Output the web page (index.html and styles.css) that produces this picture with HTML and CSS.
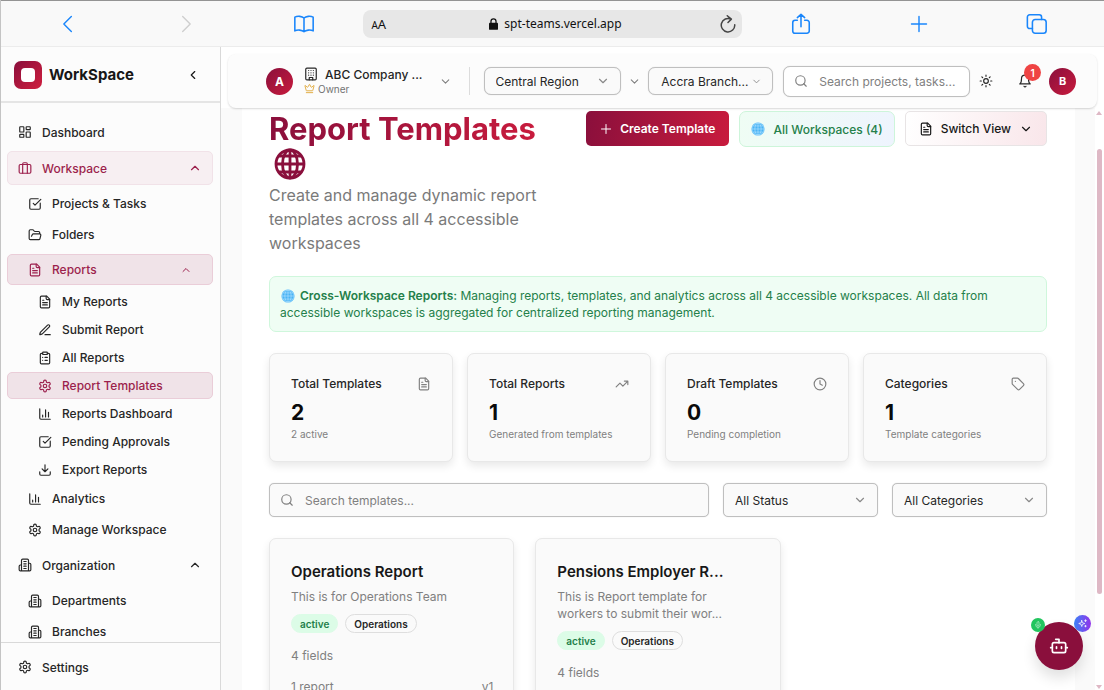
FILE: index.html
```html
<!DOCTYPE html>
<html lang="en">
<head>
<meta charset="utf-8">
<title>WorkSpace - Report Templates</title>
<link rel="stylesheet" href="styles.css">
</head>
<body>
<svg class="sprite" aria-hidden="true">
  <symbol id="chev-left" viewBox="0 0 24 24"><path d="m15 18-6-6 6-6"/></symbol>
  <symbol id="chev-down" viewBox="0 0 24 24"><path d="m6 9 6 6 6-6"/></symbol>
  <symbol id="chev-up" viewBox="0 0 24 24"><path d="m18 15-6-6-6 6"/></symbol>
  <symbol id="dashboard" viewBox="0 0 24 24"><rect x="3" y="3" width="7" height="9" rx="1"/><rect x="14" y="3" width="7" height="5" rx="1"/><rect x="14" y="12" width="7" height="9" rx="1"/><rect x="3" y="16" width="7" height="5" rx="1"/></symbol>
  <symbol id="briefcase" viewBox="0 0 24 24"><rect x="2" y="6" width="20" height="15" rx="2"/><path d="M8 21V5a2 2 0 0 1 2-2h4a2 2 0 0 1 2 2v16"/></symbol>
  <symbol id="check-square" viewBox="0 0 24 24"><path d="M21 10.5V19a2 2 0 0 1-2 2H5a2 2 0 0 1-2-2V5a2 2 0 0 1 2-2h12.5"/><path d="m9 11 3 3L22 4"/></symbol>
  <symbol id="folder" viewBox="0 0 24 24"><path d="m6 14 1.5-2.9A2 2 0 0 1 9.24 10H20a2 2 0 0 1 1.94 2.5l-1.54 6a2 2 0 0 1-1.95 1.5H4a2 2 0 0 1-2-2V5a2 2 0 0 1 2-2h3.9a2 2 0 0 1 1.69.9l.81 1.2a2 2 0 0 0 1.67.9H18a2 2 0 0 1 2 2v2"/></symbol>
  <symbol id="file" viewBox="0 0 24 24"><path d="M15 2H6a2 2 0 0 0-2 2v16a2 2 0 0 0 2 2h12a2 2 0 0 0 2-2V7Z"/><path d="M14 2v4a2 2 0 0 0 2 2h4M10 9H8M16 13H8M16 17H8"/></symbol>
  <symbol id="pen" viewBox="0 0 24 24"><path d="M12 20h9"/><path d="M16.4 3.6a2.1 2.1 0 0 1 3 3L7.4 18.6a2 2 0 0 1-.9.5l-2.9.85a.5.5 0 0 1-.6-.62l.84-2.87a2 2 0 0 1 .5-.86z"/></symbol>
  <symbol id="clipboard" viewBox="0 0 24 24"><rect x="8" y="2" width="8" height="4" rx="1"/><path d="M16 4h2a2 2 0 0 1 2 2v14a2 2 0 0 1-2 2H6a2 2 0 0 1-2-2V6a2 2 0 0 1 2-2h2M12 11h4M12 16h4M8 11h.01M8 16h.01"/></symbol>
  <symbol id="gear" viewBox="0 0 24 24"><path d="M12.22 2h-.44a2 2 0 0 0-2 2v.18a2 2 0 0 1-1 1.73l-.43.25a2 2 0 0 1-2 0l-.15-.08a2 2 0 0 0-2.73.73l-.22.38a2 2 0 0 0 .73 2.73l.15.1a2 2 0 0 1 1 1.72v.51a2 2 0 0 1-1 1.74l-.15.09a2 2 0 0 0-.73 2.73l.22.38a2 2 0 0 0 2.73.73l.15-.08a2 2 0 0 1 2 0l.43.25a2 2 0 0 1 1 1.73V20a2 2 0 0 0 2 2h.44a2 2 0 0 0 2-2v-.18a2 2 0 0 1 1-1.73l.43-.25a2 2 0 0 1 2 0l.15.08a2 2 0 0 0 2.73-.73l.22-.39a2 2 0 0 0-.73-2.73l-.15-.08a2 2 0 0 1-1-1.74v-.5a2 2 0 0 1 1-1.74l.15-.09a2 2 0 0 0 .73-2.73l-.22-.38a2 2 0 0 0-2.73-.73l-.15.08a2 2 0 0 1-2 0l-.43-.25a2 2 0 0 1-1-1.73V4a2 2 0 0 0-2-2z"/><circle cx="12" cy="12" r="3"/></symbol>
  <symbol id="chart" viewBox="0 0 24 24"><path d="M3 3v16a2 2 0 0 0 2 2h16M18 17V9M13 17V5M8 17v-3"/></symbol>
  <symbol id="download" viewBox="0 0 24 24"><path d="M21 15v4a2 2 0 0 1-2 2H5a2 2 0 0 1-2-2v-4M7 10l5 5 5-5M12 15V3"/></symbol>
  <symbol id="building" viewBox="0 0 24 24"><path d="M6 22V4a2 2 0 0 1 2-2h8a2 2 0 0 1 2 2v18ZM6 12H4a2 2 0 0 0-2 2v6a2 2 0 0 0 2 2h2M18 9h2a2 2 0 0 1 2 2v9a2 2 0 0 1-2 2h-2M10 6h4M10 10h4M10 14h4M10 18h4"/></symbol>
  <symbol id="office" viewBox="0 0 24 24"><rect x="3" y="2" width="18" height="20" rx="2"/><path d="M9 22v-4h6v4M8 6h.01M16 6h.01M12 6h.01M12 10h.01M12 14h.01M16 10h.01M16 14h.01M8 10h.01M8 14h.01"/></symbol>
  <symbol id="crown" viewBox="0 0 24 24"><path d="M11.56 3.27a.5.5 0 0 1 .88 0L15.4 8.87a1 1 0 0 0 1.5.3L21.2 5.5a.5.5 0 0 1 .8.52l-2.84 10.25a1 1 0 0 1-.95.73H5.8a1 1 0 0 1-.95-.73L2 6.02a.5.5 0 0 1 .8-.52l4.28 3.66a1 1 0 0 0 1.5-.3zM5 21h14"/></symbol>
  <symbol id="search" viewBox="0 0 24 24"><circle cx="11" cy="11" r="8"/><path d="m21 21-4.3-4.3"/></symbol>
  <symbol id="sun" viewBox="0 0 24 24"><circle cx="12" cy="12" r="4"/><path d="M12 2v2M12 20v2M4.9 4.9l1.4 1.4M17.7 17.7l1.4 1.4M2 12h2M20 12h2M6.3 17.7l-1.4 1.4M19.1 4.9l-1.4 1.4"/></symbol>
  <symbol id="bell" viewBox="0 0 24 24"><path d="M6 8a6 6 0 0 1 12 0c0 7 3 9 3 9H3s3-2 3-9M10.3 21a1.94 1.94 0 0 0 3.4 0"/></symbol>
  <symbol id="plus" viewBox="0 0 24 24"><path d="M3 12h18M12 3v18"/></symbol>
  <symbol id="trend" viewBox="0 0 24 24"><path d="m22 7-8.5 8.5-5-5L2 17M16 7h6v6"/></symbol>
  <symbol id="clock" viewBox="0 0 24 24"><circle cx="12" cy="12" r="10"/><path d="M12 6v6l4 2"/></symbol>
  <symbol id="tag" viewBox="0 0 24 24"><path d="M12.59 2.59A2 2 0 0 0 11.17 2H4a2 2 0 0 0-2 2v7.17a2 2 0 0 0 .59 1.42l8.7 8.7a2.43 2.43 0 0 0 3.42 0l6.58-6.58a2.43 2.43 0 0 0 0-3.42zM7.5 7.5h.01"/></symbol>
  <symbol id="bot" viewBox="0 0 24 24"><path d="M12 8V4H8M2 14h2M20 14h2M15 13v2M9 13v2"/><rect x="4" y="8" width="16" height="12" rx="2"/></symbol>
  <symbol id="mic" viewBox="0 0 24 24"><rect x="9" y="2" width="6" height="13" rx="3"/><path d="M19 10v2a7 7 0 0 1-14 0v-2M12 19v3"/></symbol>
  <symbol id="sparkle" viewBox="0 0 24 24"><path d="M10 4 12 10l6 2-6 2-2 6-2-6-6-2 6-2zM20 2v5M17.500 4.500h5M20 17v4M18 19h4"/></symbol>
  <symbol id="globe" viewBox="0 0 32 32"><circle cx="16" cy="16" r="14"/><ellipse cx="16" cy="16" rx="7.500" ry="14"/><path d="M16 2v28M2 16h28M5 8h22M5 24h22"/></symbol>
  <symbol id="globe-blue" viewBox="0 0 16 16"><circle cx="8" cy="8" r="7.500" fill="#49b4f5" stroke="none"/><g stroke="#b7e3ff" stroke-width="0.700" fill="none"><ellipse cx="8" cy="8" rx="3.600" ry="7"/><circle cx="8" cy="8" r="7"/><path d="M8 1v14M1 8h14M2 4.500h12M2 11.500h12"/></g></symbol>
</svg>

<div class="browser">
  <button class="tool" aria-label="Back"><svg viewBox="0 0 24 24"><path d="M16 3 7 12l9 9"/></svg></button>
  <button class="tool tool-off" aria-label="Forward"><svg viewBox="0 0 24 24"><path d="m8 3 9 9-9 9"/></svg></button>
  <button class="tool" aria-label="Bookmarks"><svg viewBox="0 0 24 24"><path d="M12 5.500C10 3.500 5 3 2 4.500v15c3-1.500 8-1 10 1 2-2 7-2.500 10-1v-15c-3-1.500-8-1-10 1zv15"/></svg></button>
  <div class="address">
    <span class="aa"><small>A</small>A</span>
    <span class="url"><svg viewBox="0 0 10 13"><rect x="0" y="5" width="10" height="8" rx="1" fill="currentColor"/><path d="M2.200 6V3.500a2.800 2.800 0 0 1 5.600 0V6" fill="none" stroke="currentColor" stroke-width="1.400"/></svg>spt-teams.vercel.app</span>
    <button class="reload" aria-label="Reload"><svg viewBox="0 0 24 24"><path d="M16 5.500A9 9 0 1 0 21 13M11 1l5.500 4.500L12 10"/></svg></button>
  </div>
  <button class="tool" aria-label="Share"><svg viewBox="0 0 24 24"><path d="M8 8H5.500A2.500 2.500 0 0 0 3 10.500v9A2.500 2.500 0 0 0 5.500 22h13a2.500 2.500 0 0 0 2.500-2.500v-9A2.500 2.500 0 0 0 18.500 8H16M12 15V1.500M8 5l4-3.500L16 5"/></svg></button>
  <button class="tool" aria-label="New tab"><svg viewBox="0 0 24 24"><path d="M3 12h18M12 3v18"/></svg></button>
  <button class="tool" aria-label="Tabs"><svg viewBox="0 0 24 24"><rect x="7" y="7" width="15" height="15" rx="3"/><path d="M7 17H4a2.500 2.500 0 0 1-2.500-2.500V4.500A2.500 2.500 0 0 1 4 2h10.500A2.500 2.500 0 0 1 17 4.500V7"/></svg></button>
</div>

<div class="app">
  <aside class="sidebar">
    <div class="brand">
      <span class="logo"></span>
      <strong>WorkSpace</strong>
      <button class="collapse" aria-label="Collapse sidebar"><svg class="icon"><use href="#chev-left"/></svg></button>
    </div>
    <nav class="nav">
      <a class="row" href="#"><svg class="icon"><use href="#dashboard"/></svg>Dashboard</a>
      <a class="row open" href="#"><svg class="icon"><use href="#briefcase"/></svg>Workspace<svg class="icon caret"><use href="#chev-up"/></svg></a>
      <div class="level2">
        <a class="row" href="#"><svg class="icon"><use href="#check-square"/></svg>Projects &amp; Tasks</a>
        <a class="row" href="#"><svg class="icon"><use href="#folder"/></svg>Folders</a>
        <a class="row active" href="#"><svg class="icon"><use href="#file"/></svg>Reports<svg class="icon caret"><use href="#chev-up"/></svg></a>
        <div class="level3">
          <a class="row" href="#"><svg class="icon"><use href="#file"/></svg>My Reports</a>
          <a class="row" href="#"><svg class="icon"><use href="#pen"/></svg>Submit Report</a>
          <a class="row" href="#"><svg class="icon"><use href="#clipboard"/></svg>All Reports</a>
          <a class="row active" href="#"><svg class="icon"><use href="#gear"/></svg>Report Templates</a>
          <a class="row" href="#"><svg class="icon"><use href="#chart"/></svg>Reports Dashboard</a>
          <a class="row" href="#"><svg class="icon"><use href="#check-square"/></svg>Pending Approvals</a>
          <a class="row" href="#"><svg class="icon"><use href="#download"/></svg>Export Reports</a>
        </div>
        <a class="row" href="#"><svg class="icon"><use href="#chart"/></svg>Analytics</a>
        <a class="row" href="#"><svg class="icon"><use href="#gear"/></svg>Manage Workspace</a>
      </div>
      <a class="row" href="#"><svg class="icon"><use href="#building"/></svg>Organization<svg class="icon caret"><use href="#chev-up"/></svg></a>
      <div class="level2">
        <a class="row" href="#"><svg class="icon"><use href="#building"/></svg>Departments</a>
        <a class="row" href="#"><svg class="icon"><use href="#building"/></svg>Branches</a>
      </div>
    </nav>
    <div class="side-foot">
      <a class="row" href="#"><svg class="icon"><use href="#gear"/></svg>Settings</a>
    </div>
  </aside>

  <main class="main">
    <header class="topbar">
      <span class="avatar">A</span>
      <button class="company">
        <span class="company-text">
          <span class="company-name"><svg class="icon"><use href="#office"/></svg>ABC Company ...</span>
          <span class="company-role"><svg class="icon"><use href="#crown"/></svg>Owner</span>
        </span>
        <svg class="icon small"><use href="#chev-down"/></svg>
      </button>
      <span class="divider"></span>
      <span class="picker region">
        <select aria-label="Region"><option>Central Region</option></select>
        <svg class="icon"><use href="#chev-down"/></svg>
      </span>
      <svg class="icon small between"><use href="#chev-down"/></svg>
      <span class="picker branch">
        <select aria-label="Branch"><option>Accra Branch...</option></select>
        <svg class="icon"><use href="#chev-down"/></svg>
      </span>
      <label class="search top-search">
        <svg class="icon"><use href="#search"/></svg>
        <input type="text" aria-label="Search projects" placeholder="Search projects, tasks...">
      </label>
      <button class="plain" aria-label="Theme"><svg class="icon"><use href="#sun"/></svg></button>
      <button class="plain bell" aria-label="Notifications"><svg class="icon"><use href="#bell"/></svg><span class="count">1</span></button>
      <span class="avatar avatar-b">B</span>
    </header>

    <div class="scroller">
      <div class="page">
        <section class="head">
          <div class="intro">
            <h1><span>Report Templates</span> <svg class="title-globe"><use href="#globe"/></svg></h1>
            <p>Create and manage dynamic report templates across all 4 accessible workspaces</p>
          </div>
          <div class="actions">
            <button class="btn primary"><svg class="icon"><use href="#plus"/></svg>Create Template</button>
            <span class="btn all"><svg class="globe"><use href="#globe-blue"/></svg>All Workspaces (4)</span>
            <button class="btn switch"><svg class="icon"><use href="#file"/></svg>Switch View<svg class="icon"><use href="#chev-down"/></svg></button>
          </div>
        </section>

        <p class="notice"><svg class="globe"><use href="#globe-blue"/></svg><b>Cross-Workspace Reports:</b> Managing reports, templates, and analytics across all 4 accessible workspaces. All data from accessible workspaces is aggregated for centralized reporting management.</p>

        <section class="stats">
          <article class="card"><h2>Total Templates<svg class="icon"><use href="#file"/></svg></h2><strong>2</strong><p>2 active</p></article>
          <article class="card"><h2>Total Reports<svg class="icon"><use href="#trend"/></svg></h2><strong>1</strong><p>Generated from templates</p></article>
          <article class="card"><h2>Draft Templates<svg class="icon"><use href="#clock"/></svg></h2><strong>0</strong><p>Pending completion</p></article>
          <article class="card"><h2>Categories<svg class="icon"><use href="#tag"/></svg></h2><strong>1</strong><p>Template categories</p></article>
        </section>

        <section class="filters">
          <label class="search">
            <svg class="icon"><use href="#search"/></svg>
            <input type="text" aria-label="Search templates" placeholder="Search templates...">
          </label>
          <span class="picker">
            <select aria-label="Status"><option>All Status</option></select>
            <svg class="icon"><use href="#chev-down"/></svg>
          </span>
          <span class="picker">
            <select aria-label="Category"><option>All Categories</option></select>
            <svg class="icon"><use href="#chev-down"/></svg>
          </span>
        </section>

        <section class="templates">
          <article class="card">
            <h3>Operations Report</h3>
            <p>This is for Operations Team</p>
            <div class="tags"><span class="tag on">active</span><span class="tag">Operations</span></div>
            <div class="meta"><span>4 fields</span></div>
            <div class="meta"><span>1 report</span><span>v1</span></div>
          </article>
          <article class="card">
            <h3>Pensions Employer R...</h3>
            <p>This is Report template for workers to submit their wor...</p>
            <div class="tags"><span class="tag on">active</span><span class="tag">Operations</span></div>
            <div class="meta"><span>4 fields</span></div>
          </article>
        </section>
      </div>
      <div class="scrollbar"><i class="up"></i><i class="thumb"></i><i class="down"></i></div>
    </div>
    <button class="fab" aria-label="Assistant">
      <svg class="icon"><use href="#bot"/></svg>
      <span class="dot green"><svg class="icon"><use href="#mic"/></svg></span>
      <span class="dot violet"><svg class="icon"><use href="#sparkle"/></svg></span>
    </button>
  </main>
</div>
</body>
</html>
```
FILE: styles.css
```css
* { box-sizing: border-box; }
body {
  margin: 0;
  height: 100vh;
  display: flex;
  flex-direction: column;
  overflow: hidden;
  font-family: Inter, "Liberation Sans", sans-serif;
  font-size: 12px;
  color: #262626;
  background: #fff;
  border-left: 1px solid #c4c4c4;
}
button { font: inherit; color: inherit; background: none; border: 0; padding: 0; }
h1, h2, h3, p { margin: 0; }
a { color: inherit; text-decoration: none; }
.sprite { position: absolute; width: 0; height: 0; }
.icon {
  width: 14px;
  height: 14px;
  flex: none;
  fill: none;
  stroke: currentColor;
  stroke-width: 2;
  stroke-linecap: round;
  stroke-linejoin: round;
}

/* Browser toolbar */
.browser {
  flex: none;
  height: 47px;
  display: grid;
  grid-template-columns: repeat(3, 1fr) 3.2fr repeat(3, 1fr);
  align-items: center;
  padding: 0 8px;
  background: #f9f9f9;
  border-top: 1px solid #949494;
  border-bottom: 1px solid #ececec;
}
.tool { color: #1a86fb; display: flex; justify-content: center; }
.tool svg, .reload svg {
  fill: none;
  stroke: currentColor;
  stroke-width: 1.7;
  stroke-linecap: round;
  stroke-linejoin: round;
}
.tool svg { width: 20px; height: 20px; }
.tool:nth-child(3) svg, .tool:nth-child(5) svg, .tool:nth-child(7) svg { width: 22px; height: 22px; }
.tool-off { color: #cfcfcf; }
.address {
  height: 28px;
  display: grid;
  grid-template-columns: 24px 1fr 24px;
  align-items: center;
  padding: 0 2px 0 8px;
  border-radius: 8px;
  background: #e7e7e7;
  color: #111;
  font-family: "Noto Sans", "Open Sans", sans-serif;
  font-size: 12px;
}
.aa { font-size: 13px; }
.aa small { font-size: 10px; }
.url { display: flex; align-items: center; justify-content: center; gap: 6px; }
.url svg { width: 9px; height: 12px; }
.reload { display: flex; justify-content: center; color: #444; }
.reload svg { width: 18px; height: 18px; stroke-width: 2; }

/* Shell */
.app { flex: 1; min-height: 0; display: flex; }
.sidebar {
  flex: none;
  width: 220px;
  display: flex;
  flex-direction: column;
  background: #fcfcfc;
  border-right: 1px solid #d9d9d9;
}
.brand {
  flex: none;
  height: 56px;
  display: flex;
  align-items: center;
  gap: 7px;
  padding: 1px 20px 0 13px;
  border-bottom: 2px solid #e5e5e5;
  color: #171717;
  font-size: 15px;
}
.brand strong { flex: 1; }
.logo {
  width: 28px;
  height: 28px;
  display: grid;
  place-items: center;
  border-radius: 7px;
  background: linear-gradient(135deg, #8a0f3c, #d01f3f);
}
.logo::after { content: ""; width: 14px; height: 14px; border-radius: 4px; background: #fff; }
.collapse { display: flex; }
.nav {
  flex: 1;
  min-height: 0;
  overflow: hidden;
  display: flex;
  flex-direction: column;
  gap: 2px;
  padding: 12px 7px 0 6px;
}
.row {
  flex: none;
  height: 34px;
  display: flex;
  align-items: center;
  gap: 10px;
  padding: 0 10px;
  border: 1px solid transparent;
  border-radius: 5px;
  font-weight: 500;
}
.caret { margin-left: auto; }
.row.open { color: #9c1f4c; background: #f7eff2; border-color: #f1e2e8; }
.row.active { color: #9c1f4c; background: #f0e3e8; border-color: #eacdd8; }
.level2 { display: flex; flex-direction: column; padding: 1px 0; }
.level2 .row { height: 31px; padding: 0 20px; }
.level2 > .active { margin-top: 4px; }
.level2 > .active .caret { width: 12px; height: 12px; }
.level3 { display: flex; flex-direction: column; gap: 1px; padding-top: 3px; }
.level3 .row { height: 27px; padding: 0 30px; }
.side-foot {
  flex: none;
  height: 48px;
  padding: 7px 7px 0 6px;
  border-top: 1px solid #d9d9d9;
}

/* Top bar */
.main { flex: 1; min-width: 0; display: flex; flex-direction: column; position: relative; }
.topbar {
  flex: none;
  height: 54px;
  display: flex;
  align-items: center;
  margin: 7px 7px 0;
  padding: 0 21px 0 38px;
  background: #fcfcfc;
  border-radius: 8px;
  box-shadow: 0 1px 2px rgba(0, 0, 0, 0.16);
  position: relative;
}
.avatar {
  flex: none;
  width: 27px;
  height: 27px;
  border-radius: 50%;
  display: grid;
  place-items: center;
  color: #fff;
  font-size: 12px;
  font-weight: 700;
  background: linear-gradient(135deg, #8a0f3c, #c81b3d);
}
.avatar-b { font-size: 11px; margin-left: 17px; }
.company { display: flex; align-items: center; gap: 16px; margin-left: 11px; }
.company-text { display: flex; flex-direction: column; align-items: flex-start; }
.company-name, .company-role { display: flex; align-items: center; white-space: nowrap; }
.company-name { gap: 7px; font-weight: 500; line-height: 15px; }
.company-role { gap: 3px; color: #737373; font-size: 10px; line-height: 14px; }
.company-role .icon { width: 11px; height: 11px; color: #dfa83a; }
.small { width: 13px; height: 13px; color: #808080; }
.divider { width: 1px; height: 28px; background: #dcdcdc; margin: 0 14px 0 17px; }
.between { margin: 0 7px; }
.picker { display: grid; align-items: center; min-width: 0; }
.picker > * { grid-area: 1 / 1; }
.picker .icon { justify-self: end; margin-right: 11px; color: #8a8a8a; pointer-events: none; }
.picker select {
  width: 100%;
  height: 34px;
  padding: 0 11px;
  appearance: none;
  font: inherit;
  color: #262626;
  background: #fafafa;
  border: 1px solid #bfbfbf;
  border-radius: 5px;
  box-shadow: 0 0 1px rgba(0, 0, 0, 0.2);
}
.topbar .picker select { height: 28px; border-radius: 7px; }
.topbar .branch select { padding: 0 12px; }
.region { flex: 138 1 0; }
.branch { flex: 125 1 0; }
.topbar .branch .icon { width: 11px; height: 11px; }
.search {
  display: flex;
  align-items: center;
  gap: 11px;
  min-width: 0;
  padding: 0 10px;
  color: #808080;
  background: #fafafa;
  border: 1px solid #bfbfbf;
  border-radius: 5px;
  box-shadow: 0 0 1px rgba(0, 0, 0, 0.2);
}
.search input {
  flex: 1;
  min-width: 0;
  padding: 0;
  font: inherit;
  border: 0;
  outline: 0;
  background: none;
}
.search input::placeholder { color: #808080; opacity: 1; }
.top-search {
  flex: 165 1 0;
  height: 31px;
  margin-left: 10px;
  background: #fff;
  border-radius: 7px;
}
.plain { display: flex; margin-left: 9px; }
.bell { position: relative; margin-left: 25px; }
.count {
  position: absolute;
  left: 6px;
  top: -10px;
  width: 17px;
  height: 17px;
  border-radius: 50%;
  display: grid;
  place-items: center;
  color: #fff;
  background: #ef4444;
  font-size: 10px;
  font-weight: 600;
}

/* Page body */
.scroller { flex: 1; min-height: 0; display: flex; overflow: hidden; background: #fafafa; }
.page {
  flex: 1;
  min-width: 0;
  display: flex;
  flex-direction: column;
  gap: 21px;
  margin: 0 20px 0 21px;
  padding: 3px 28px 0 27px;
  background: #fff;
}
.scrollbar {
  flex: none;
  width: 9px;
  display: flex;
  flex-direction: column;
  align-items: center;
  padding: 3px 1px 1px 0;
  background: #fff;
}
.up, .down { border: 3px solid transparent; }
.up { border-bottom: 4px solid #deb8c5; border-top: 0; }
.down { border-top: 4px solid #deb8c5; border-bottom: 0; margin-top: auto; }
.thumb { width: 5px; height: 77%; margin-top: 34px; border-radius: 3px; background: #deb8c5; }

.head { display: flex; justify-content: space-between; align-items: flex-start; gap: 21px; }
.intro { flex: 1; min-width: 0; }
h1 { color: #8a0f3c; font-size: 31px; line-height: 35px; font-weight: 700; }
h1 span {
  display: inline-block;
  color: transparent;
  background: linear-gradient(90deg, #8a0f3c, #c81b3d);
  background-clip: text;
}
.title-globe {
  display: block;
  width: 32px;
  height: 32px;
  margin: 2px 0 1px 5px;
  fill: none;
  stroke: currentColor;
  stroke-width: 2.8;
}
.intro p { margin-top: 3px; color: #7a7a7a; font-size: 16px; line-height: 24px; max-width: 280px; }
.actions { flex: none; display: flex; gap: 10px; }
.btn {
  height: 35px;
  display: flex;
  align-items: center;
  gap: 8px;
  padding: 0 13px;
  border: 1px solid transparent;
  border-radius: 5px;
  font-weight: 500;
  white-space: nowrap;
}
.primary { color: #fff; font-weight: 600; background: linear-gradient(100deg, #8a0f3c, #c81b3d) border-box; }
.primary .icon { width: 12px; height: 12px; }
.all { height: 36px; padding: 0 11px; color: #24804a; background: linear-gradient(100deg, #effdf4, #eef4fe); border-color: #cdf5da; border-radius: 7px; }
.switch { color: #171717; background: linear-gradient(100deg, #fff, #f9e6ea); border-color: #e8e4e5; }
.globe { width: 14px; height: 14px; flex: none; }

.notice {
  padding: 10px;
  color: #24804a;
  line-height: 17px;
  background: #effdf4;
  border: 1px solid #cff7dc;
  border-radius: 7px;
}
.notice .globe { vertical-align: -3px; margin: -2px 5px 0 1px; }
.notice b { font-weight: 600; }

.card {
  min-width: 0;
  padding: 20px 21px;
  background: #fafafa;
  border: 1px solid #e8e8e8;
  border-radius: 7px;
  box-shadow: 0 4px 8px rgba(0, 0, 0, 0.09);
}
.stats { display: grid; grid-template-columns: repeat(4, 1fr); gap: 14px; }
.stats h2 {
  display: flex;
  justify-content: space-between;
  align-items: center;
  font-size: 12px;
  line-height: 20px;
  font-weight: 500;
}
.stats h2 .icon { color: #808080; }
.stats strong { display: block; margin-top: 5px; color: #0a0a0a; font-size: 21px; line-height: 28px; }
.stats p { color: #808080; font-size: 10px; line-height: 14px; }

.filters { display: grid; grid-template-columns: 1fr 155px 155px; gap: 14px; }

.templates { display: grid; grid-template-columns: repeat(3, 1fr); gap: 21px; }
.templates .card { padding: 22px 20px 22px 21px; }
.templates h3 { color: #171717; font-size: 15px; line-height: 22px; font-weight: 600; }
.templates p { margin-top: 5px; max-width: 170px; color: #808080; line-height: 17px; }
.tags { display: flex; gap: 7px; margin-top: 9px; }
.tag {
  height: 19px;
  display: flex;
  align-items: center;
  padding: 0 8px;
  border: 1px solid #dedede;
  border-radius: 10px;
  font-size: 10px;
  font-weight: 600;
}
.tag.on { color: #24804a; background: #dcfce7; border-color: #dcfce7; }
.meta { display: flex; justify-content: space-between; margin-top: 14px; color: #808080; line-height: 17px; }

/* Assistant button */
.fab {
  position: absolute;
  right: 21px;
  bottom: 20px;
  width: 48px;
  height: 48px;
  display: grid;
  place-items: center;
  border-radius: 50%;
  color: #fff;
  background: #8a0f3c;
  box-shadow: 0 8px 14px rgba(0, 0, 0, 0.12);
}
.fab > .icon { width: 20px; height: 20px; }
.dot { position: absolute; display: grid; place-items: center; border-radius: 50%; }
.dot .icon { width: 9px; height: 9px; }
.green { left: -4px; top: -4px; width: 14px; height: 14px; background: #22c55e; }
.green .icon { width: 8px; height: 8px; opacity: 0.7; }
.violet { right: -8px; top: -7px; width: 17px; height: 17px; background: linear-gradient(90deg, #3b82f6, #9333ea); }
```
